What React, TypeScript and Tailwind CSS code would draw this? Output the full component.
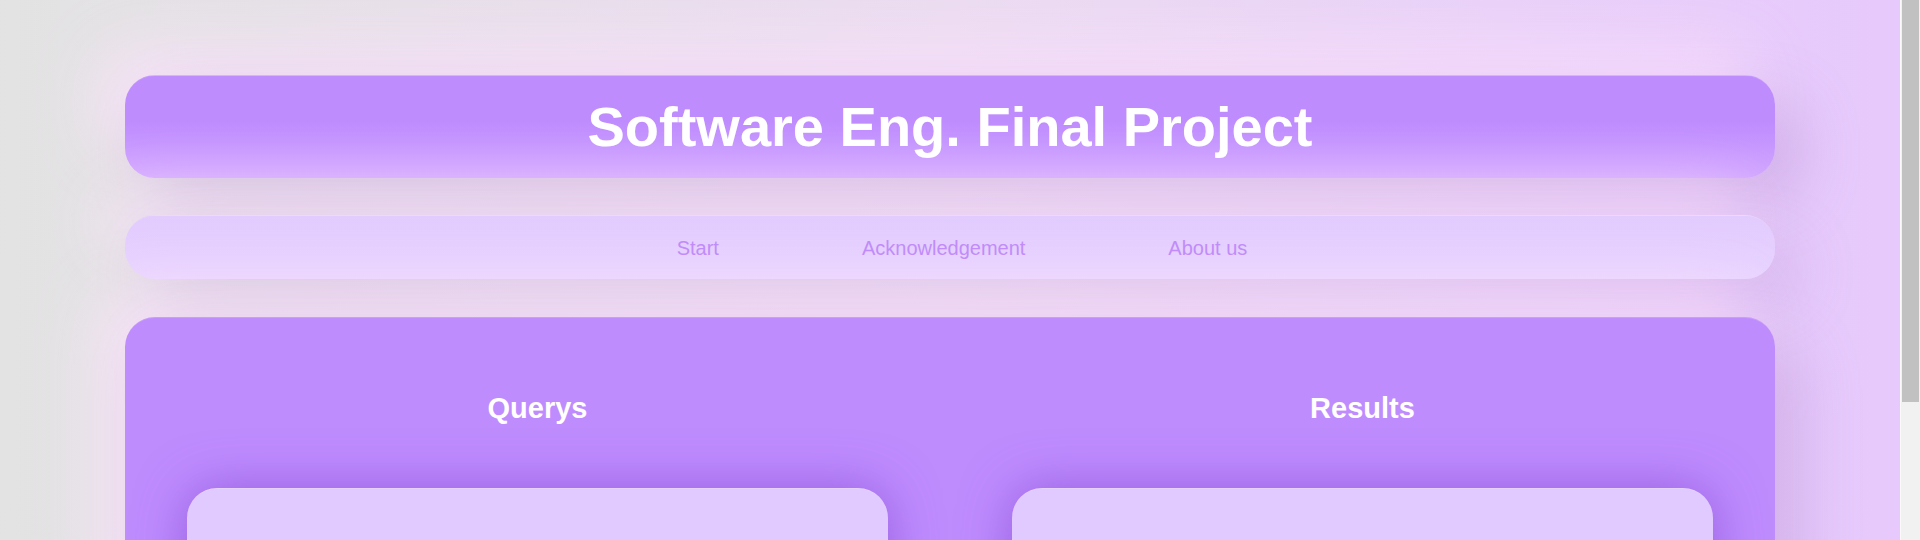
export default function App() {
    const links = ["Start", "Acknowledgement", "About us"]
    const columns = ["Querys", "Results"]

    return (
        <div className="flex h-screen overflow-hidden" style={{fontFamily: '"Liberation Sans", Arial, sans-serif'}}>
            <div className="h-full w-[1900px] shrink-0 overflow-hidden">
                <div className="min-h-full bg-gradient-to-r from-[#e3e3e3] via-[#ecdcf1] to-[#e7c9fd] px-[125px] pt-[75px] pb-[38px]">
                    <header className="flex h-[103px] items-center justify-center rounded-[30px] border-t border-white/15 bg-gradient-to-b from-[#bf8cfe] from-45% to-[#d1a6ff] shadow-[25px_25px_60px_rgba(150,100,190,0.28),-25px_-25px_60px_rgba(255,228,255,0.7)]">
                        <h1 className="text-[56px] font-bold leading-none text-white">Software Eng. Final Project</h1>
                    </header>

                    <nav className="mt-[37px] flex h-[64px] items-center justify-center gap-[143px] rounded-[30px] border-t border-white/15 bg-gradient-to-b from-[#e2cbfe] to-[#e8d4ff] pl-[24px] shadow-[25px_25px_60px_rgba(150,100,190,0.22),-25px_-25px_60px_rgba(255,228,255,0.6)]">
                        {links.map((link) => (
                            <a key={link} href="#" className="text-[20px] leading-none text-[#c18cf9]">
                                {link}
                            </a>
                        ))}
                    </nav>

                    <main className="mt-[38px] grid grid-cols-2 rounded-[30px] border-t border-white/15 bg-[#bf8cfe] pt-[74px] pb-[40px] shadow-[25px_25px_60px_rgba(150,100,190,0.28),-25px_-25px_60px_rgba(255,228,255,0.7)]">
                        {columns.map((title) => (
                            <section key={title} className="flex flex-col items-center">
                                <h2 className="h-[33px] text-[29px] font-bold leading-[33px] text-white">{title}</h2>
                                <div className="mt-[63px] h-[160px] w-[85%] rounded-[30px] border-t border-white/15 bg-[#e1caff] shadow-[0_0_50px_rgba(115,55,200,0.55)]"></div>
                            </section>
                        ))}
                    </main>
                </div>
            </div>

            {/* scrollbar as in the screenshot */}
            <div className="h-full w-[20px] shrink-0 border-l border-[#fafafa] bg-[#f1f1f1] pr-[1px] pl-[1px]">
                <div className="h-[402px] bg-[#c1c1c1]"></div>
            </div>
        </div>
    )
}
